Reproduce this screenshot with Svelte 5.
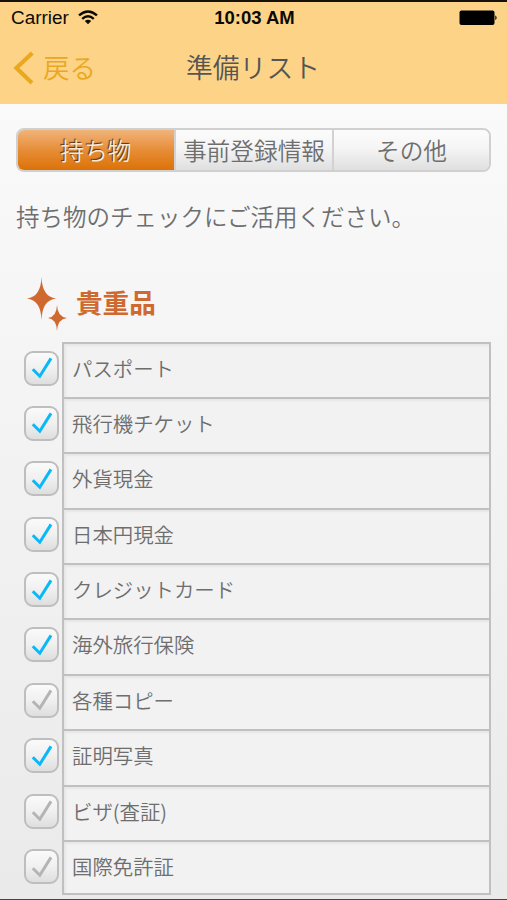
<script lang="ts">
  interface Item {
    label: string;
    done: boolean;
  }

  const tabs = ['持ち物', '事前登録情報', 'その他'];
  let active = $state(0);

  let items: Item[] = $state([
    { label: 'パスポート', done: true },
    { label: '飛行機チケット', done: true },
    { label: '外貨現金', done: true },
    { label: '日本円現金', done: true },
    { label: 'クレジットカード', done: true },
    { label: '海外旅行保険', done: true },
    { label: '各種コピー', done: false },
    { label: '証明写真', done: true },
    { label: 'ビザ(査証)', done: false },
    { label: '国際免許証', done: false }
  ]);
</script>

<div class="screen">
  <header class="top">
    <div class="status">
      <span class="carrier">
        Carrier
        <svg class="wifi" width="20" height="15" viewBox="0 0 20 15" fill="none" stroke="#0c0a06" stroke-width="2.4">
          <path d="M1 5.4 Q10 -2.6 19 5.4" />
          <path d="M4.2 8.8 Q10 3.8 15.8 8.8" />
          <path d="M10 14.2 L6.8 11 Q10 8.6 13.2 11 Z" fill="#0c0a06" stroke="none" />
        </svg>
      </span>
      <span class="time">10:03 AM</span>
      <svg class="battery" width="39" height="16" viewBox="0 0 39 16">
        <rect x="0.5" y="0.5" width="35" height="14.5" rx="2" />
        <path d="M36.3 5.3 Q39 7.7 36.3 10.2 Z" />
      </svg>
    </div>
    <nav class="bar">
      <button class="back">
        <svg width="22" height="34" viewBox="0 0 22 34" fill="none" stroke="#e9a820" stroke-width="4.2">
          <path d="M20.3 2 L4.4 17 L20 32" />
        </svg>
        <span>戻る</span>
      </button>
      <h1>準備リスト</h1>
    </nav>
  </header>

  <main>
    <div class="tabs" role="tablist">
      {#each tabs as tab, i}
        <button
          class="tab"
          class:active={active === i}
          role="tab"
          aria-selected={active === i}
          onclick={() => (active = i)}
        >{tab}</button>
      {/each}
    </div>

    <p class="intro">持ち物のチェックにご活用ください。</p>

    <h2>
      <svg width="42" height="54" viewBox="0 0 42 54" fill="#cf6930">
        <path d="M15.5 0 Q16.2 20 30 21.5 Q16.2 23 15.5 43 Q14.8 23 1 21.5 Q14.8 20 15.5 0 Z" />
        <circle cx="15.5" cy="21.5" r="4.8" />
        <path d="M31 28 Q31.5 40 41 41 Q31.5 42 31 54 Q30.5 42 22 41 Q30.5 40 31 28 Z" />
        <circle cx="31" cy="41" r="2.9" />
      </svg>
      <span>貴重品</span>
    </h2>

    <ul class="list">
      {#each items as item}
        <li>
          <button
            class="check"
            class:done={item.done}
            role="checkbox"
            aria-checked={item.done}
            aria-label={item.label}
            onclick={() => (item.done = !item.done)}
          >
            <svg width="22" height="22" viewBox="0 0 22 22" fill="none" stroke="currentColor" stroke-width="3">
              <path d="M1.8 12.2 L8.8 19.2 L20 1.4" />
            </svg>
          </button>
          <div class="cell">{item.label}</div>
        </li>
      {/each}
    </ul>
  </main>
</div>

<style>
  :global(body) {
    margin: 0;
    background: #f0f0f0;
  }
  .screen {
    box-sizing: border-box;
    height: 900px;
    overflow: hidden;
    border-top: 2px solid #171209;
    border-bottom: 1px solid #444;
    background: linear-gradient(#fafafa 100px, #f5f5f5 340px, #eaeaea);
    color: #6e6e6e;
    font-family: 'Noto Sans CJK JP', sans-serif;
    font-weight: 350;
  }
  button {
    margin: 0;
    padding: 0;
    border: none;
    background: none;
    color: inherit;
    font: inherit;
    cursor: pointer;
  }
  .top {
    box-sizing: border-box;
    height: 102px;
    background: #fdd487;
    border-bottom: 1px solid #ead6b3;
  }
  .status {
    display: grid;
    grid-template-columns: 1fr auto 1fr;
    align-items: center;
    height: 32px;
    padding: 0 9px 0 11px;
    color: #0c0a06;
    font-family: 'Liberation Sans', Arial, sans-serif;
    font-size: 18.9px;
    font-weight: 400;
  }
  .carrier {
    display: flex;
    align-items: center;
    gap: 9px;
  }
  .wifi {
    margin-top: -2px;
  }
  .time {
    font-size: 18.5px;
    font-weight: 700;
  }
  .battery {
    justify-self: end;
  }
  .bar {
    display: grid;
    grid-template-columns: 1fr auto 1fr;
    align-items: center;
    height: 68px;
    padding: 0 13px 0 12px;
  }
  .back {
    display: flex;
    align-items: center;
    gap: 9px;
    color: #e9a820;
    font-size: 26.6px;
    line-height: 34px;
  }
  .back span {
    margin-top: -2px;
  }
  h1 {
    margin: -2px 0 0;
    color: #555;
    font-size: 26.8px;
    font-weight: 350;
    line-height: 34px;
  }
  main {
    padding: 24px 16px 0;
  }
  .tabs {
    box-sizing: border-box;
    display: grid;
    grid-template-columns: 156px 158px 1fr;
    height: 44px;
    border: 2px solid #d0d0d0;
    border-radius: 8px;
    overflow: hidden;
  }
  .tab {
    border-left: 2px solid #d2d2d2;
    background: linear-gradient(#fcfcfc, #f5f5f5 45%, #dfdfdf);
    font-size: 23.7px;
    line-height: 38px;
    white-space: nowrap;
  }
  .tab:first-child {
    border-left: none;
  }
  .tab.active {
    background: linear-gradient(#f1b47a, #e78d37 50%, #dc7208);
    color: #f8e8d5;
    text-shadow: -1px -1px 1px #50311a;
  }
  .intro {
    margin: 26px 0 0;
    font-size: 23.5px;
    line-height: 36px;
    white-space: nowrap;
  }
  h2 {
    display: flex;
    align-items: center;
    gap: 8px;
    margin: 43px 0 0 10px;
    color: #cf6930;
    font-size: 26.6px;
    font-weight: 700;
    line-height: 54px;
  }
  h2 span {
    margin-top: -5px;
  }
  .list {
    margin: 10.5px 0 0 8px;
    padding: 0;
    list-style: none;
  }
  li {
    display: flex;
    gap: 3px;
    height: 55.4px;
  }
  .check {
    box-sizing: border-box;
    display: grid;
    place-items: center;
    width: 35px;
    height: 35px;
    margin-top: 9px;
    border: 2px solid #bebebe;
    border-radius: 9px;
    background: linear-gradient(#fafafa, #f0f0f0 50%, #dedede);
    color: #b4b4b4;
  }
  .check.done {
    color: #08b8f8;
  }
  .cell {
    box-sizing: border-box;
    flex: 1;
    padding-left: 8px;
    border: 2px solid #c0c0c0;
    border-bottom: none;
    background: #f2f2f2;
    box-shadow: inset 2px 2px 2px #e6e6e6;
    font-size: 20.4px;
    line-height: 48px;
  }
  li:last-child .cell {
    border-bottom: 2px solid #c0c0c0;
  }
</style>
